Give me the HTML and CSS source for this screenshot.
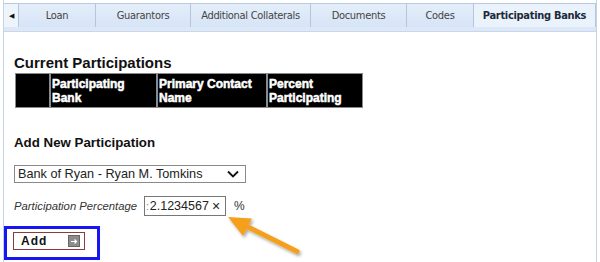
FILE: index.html
```html
<!DOCTYPE html>
<html lang="en">
<head>
    <meta charset="UTF-8">
    <title>Participating Banks</title>
    <link rel="stylesheet" href="styles.css">
</head>
<body>
    <div class="page">
        <!-- Barre d'onglets -->
        <div class="tabs">
            <div class="tab-scroll">&#9664;</div>
            <div class="tab tab-loan">Loan</div>
            <div class="tab tab-guar">Guarantors</div>
            <div class="tab tab-coll">Additional Collaterals</div>
            <div class="tab tab-docs">Documents</div>
            <div class="tab tab-codes">Codes</div>
            <div class="tab tab-banks active">Participating Banks</div>
        </div>
        <div class="tabs-strip"></div>

        <div class="content">
            <h2>Current Participations</h2>
            <table class="grid">
                <tr>
                    <th class="col-blank"></th>
                    <th class="col-bank">Participating Bank</th>
                    <th class="col-contact">Primary Contact Name</th>
                    <th class="col-pct">Percent Participating</th>
                </tr>
            </table>

            <h3>Add New Participation</h3>
            <div class="select">
                <span>Bank of Ryan - Ryan M. Tomkins</span>
                <svg class="chevron" width="12" height="8" viewBox="0 0 12 8">
                    <path d="M1 1.5 L6 6.5 L11 1.5" fill="none" stroke="#111" stroke-width="1.8"/>
                </svg>
            </div>

            <div class="pct-row">
                <label>Participation Percentage</label>
                <div class="pct-input"><span class="cut">:</span>2.1234567 <span class="clear">&times;</span></div>
                <span class="pct-sign">%</span>
            </div>

            <div class="add-wrap">
                <button class="add-btn">Add <span class="add-icon">
                    <svg width="9" height="9" viewBox="0 0 9 9"><path d="M1 4.5 H6 M4.5 2.5 L6.5 4.5 L4.5 6.5" fill="none" stroke="#fff" stroke-width="1.2"/></svg>
                </span></button>
            </div>
        </div>

        <!-- Flèche d'annotation -->
        <svg class="callout" width="90" height="55" viewBox="0 0 90 55">
            <defs>
                <filter id="sh" x="-20%" y="-20%" width="140%" height="140%">
                    <feDropShadow dx="1.5" dy="2" stdDeviation="1.5" flood-color="#000" flood-opacity="0.35"/>
                </filter>
            </defs>
            <g filter="url(#sh)">
                <path d="M25 20 L76 45.5" stroke="#f5a01e" stroke-width="5" stroke-linecap="round"/>
                <path d="M7 11 L31 12.5 L22 30 Z" fill="#f5a01e"/>
            </g>
        </svg>
    </div>
</body>
</html>
```

FILE: styles.css
```css
body {
    margin: 0;
    padding: 0;
    background: #fff;
    font-family: "Liberation Sans", Arial, sans-serif;
    color: #111;
}
.page {
    position: relative;
    width: 594px;
    height: 262px;
    margin-left: 3px;
    border-left: 1px solid #c4d2e4;
    border-right: 1px solid #c4d2e4;
    box-sizing: border-box;
    padding-top: 3px;
}
.tabs {
    display: flex;
    height: 23px;
    border-top: 1px solid #b9cadf;
    background: #dce8f7;
}
.tab-scroll {
    width: 14px;
    font-size: 7px;
    color: #111;
    display: flex;
    align-items: center;
    justify-content: center;
    border-right: 1px solid #b3c6dd;
    background: #eef4fb;
}
.tab {
    display: flex;
    align-items: center;
    justify-content: center;
    font-size: 11px;
    color: #444;
    border-right: 1px solid #b3c6dd;
    background: linear-gradient(#e4eefa, #d6e4f6);
    font-family: "DejaVu Sans Condensed", "Liberation Sans", sans-serif;
    letter-spacing: -0.3px;
}
.tab-loan { width: 76px; }
.tab-guar { width: 94px; }
.tab-coll { width: 119px; }
.tab-docs { width: 95px; }
.tab-codes { width: 66px; }
.tab-banks { flex: 1; }
.tab.active {
    background: #eaf2fc;
    font-weight: bold;
    color: #1d2a3a;
}
.tabs-strip {
    height: 4px;
    background: #dce8f7;
    border-bottom: 1px solid #c9d7e8;
}
.content {
    padding: 22px 0 0 10px;
}
h2 {
    margin: 0;
    font-size: 15px;
    font-weight: bold;
    line-height: 17px;
}
.grid {
    border-collapse: separate;
    border-spacing: 2px;
    margin: 1px 0 0 0;
}
.grid th {
    background: #000;
    color: #fff;
    font-size: 12px;
    font-weight: bold;
    text-align: left;
    vertical-align: top;
    height: 30px;
    padding: 3px 2px 0 1px;
    outline: 1px solid #8a8a8a;
    line-height: 14px;
    -webkit-text-stroke: 0.5px #fff;
}
.col-blank { width: 30px; }
.col-bank { width: 102px; }
.col-contact { width: 105px; }
.col-pct { width: 91px; }
h3 {
    margin: 26px 0 0 0;
    font-size: 13.3px;
    font-weight: bold;
    line-height: 16px;
}
.select {
    display: flex;
    align-items: center;
    justify-content: space-between;
    width: 232px;
    height: 18px;
    margin-top: 14px;
    border: 1px solid #8a8a8a;
    box-sizing: border-box;
    padding: 0 6px 0 3px;
    font-size: 12.7px;
    color: #222;
}
.pct-row {
    display: flex;
    align-items: center;
    margin-top: 13px;
}
.pct-row label {
    font-style: italic;
    font-size: 11.3px;
    color: #333;
    width: 130px;
}
.pct-input {
    width: 82px;
    height: 20px;
    border: 1px solid #777;
    box-sizing: border-box;
    font-size: 12.5px;
    color: #222;
    display: flex;
    align-items: center;
    padding-left: 1px;
}
.cut { color: #777; font-size: 10px; margin-right: 1px; }
.clear { margin-left: 3px; font-size: 14px; }
.pct-sign {
    margin-left: 8px;
    font-size: 12px;
    color: #333;
}
.add-wrap {
    margin: 10px 0 0 -10px;
    width: 96px;
    height: 34px;
    border: 3px solid #1616f0;
    box-sizing: border-box;
    padding: 3px 0 0 6px;
}
.add-btn {
    display: flex;
    align-items: center;
    justify-content: space-between;
    width: 72px;
    height: 18px;
    border: 1px solid #8b3b3b;
    background: #fff;
    padding: 0 4px 0 7px;
    font-family: "Liberation Sans", Arial, sans-serif;
    font-size: 12px;
    font-weight: bold;
    letter-spacing: 1px;
    color: #111;
}
.add-icon {
    width: 10px;
    height: 10px;
    background: #8c8c8c;
    border: 1px solid #666;
    display: flex;
    align-items: center;
    justify-content: center;
}
.callout {
    position: absolute;
    left: 217px;
    top: 206px;
}
```
